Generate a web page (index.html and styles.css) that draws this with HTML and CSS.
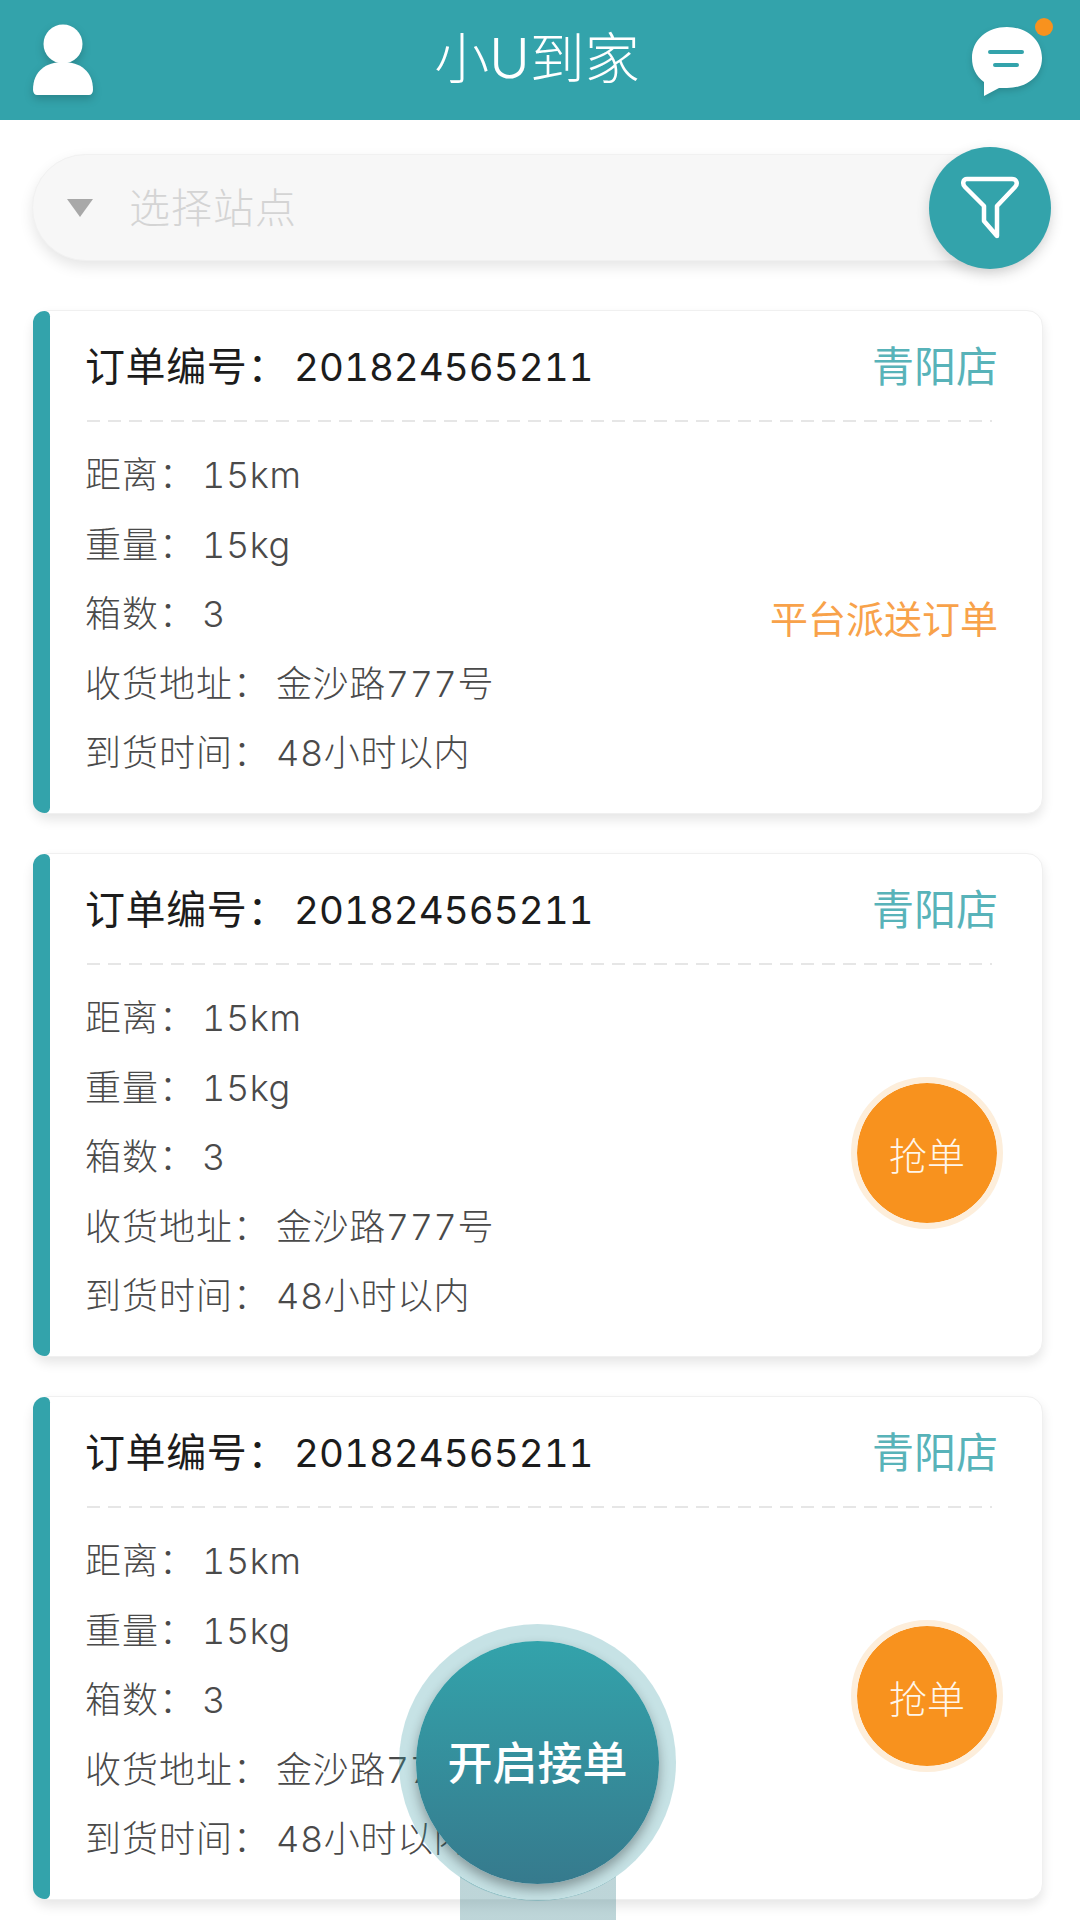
FILE: index.html
```html
<!DOCTYPE html>
<html lang="zh-CN">
<head>
<meta charset="utf-8">
<title>小U到家</title>
<link rel="stylesheet" href="styles.css">
</head>
<body>
<div class="app">
  <header class="topbar">
    <svg class="icon-user" viewBox="0 0 60 74" width="60" height="74"><circle cx="30" cy="20" r="19.5" fill="#fff"/><path d="M0 66C0 47 13 38 30 38s30 9 30 28c0 3-2 5-4 5H4c-2 0-4-2-4-5z" fill="#fff"/></svg>
    <h1 class="title">小U到家</h1>
    <div class="msg">
      <svg class="icon-msg" viewBox="0 0 72 72" width="72" height="72"><path d="M36 1c20 0 35 13 35 31S56 62 36 62c-3 0-6 0-8 0L13 70V56C5 50 1 42 1 32 1 14 16 1 36 1z" fill="#fff"/><path d="M19 26H51M24 39H46" stroke="#33a3ab" stroke-width="4" stroke-linecap="round"/></svg>
      <span class="dot"></span>
    </div>
  </header>

  <div class="search">
    <div class="search-box">
      <span class="caret"></span>
      <span class="placeholder">选择站点</span>
    </div>
    <div class="filter">
      <svg viewBox="0 0 60 66" width="60" height="66"><path d="M7 3H52C57 3 58 8 55 11L37 30V60L24 45V30L5 11C2 8 3 3 7 3z" fill="none" stroke="#fff" stroke-width="4.5" stroke-linejoin="round"/></svg>
    </div>
  </div>

  <main class="list">
    <article class="card">
      <div class="card-head"><span class="order">订单编号：<span class="order-no">201824565211</span></span><span class="shop">青阳店</span></div>
      <div class="card-body">
        <dl class="info">
          <div>距离：<span class="val">15km</span></div>
          <div>重量：<span class="val">15kg</span></div>
          <div>箱数：<span class="val">3</span></div>
          <div>收货地址：<span class="val">金沙路777号</span></div>
          <div>到货时间：<span class="val">48小时以内</span></div>
        </dl>
        <span class="dispatch">平台派送订单</span>
      </div>
    </article>
    <article class="card">
      <div class="card-head"><span class="order">订单编号：<span class="order-no">201824565211</span></span><span class="shop">青阳店</span></div>
      <div class="card-body">
        <dl class="info">
          <div>距离：<span class="val">15km</span></div>
          <div>重量：<span class="val">15kg</span></div>
          <div>箱数：<span class="val">3</span></div>
          <div>收货地址：<span class="val">金沙路777号</span></div>
          <div>到货时间：<span class="val">48小时以内</span></div>
        </dl>
        <button class="grab">抢单</button>
      </div>
    </article>
    <article class="card">
      <div class="card-head"><span class="order">订单编号：<span class="order-no">201824565211</span></span><span class="shop">青阳店</span></div>
      <div class="card-body">
        <dl class="info">
          <div>距离：<span class="val">15km</span></div>
          <div>重量：<span class="val">15kg</span></div>
          <div>箱数：<span class="val">3</span></div>
          <div>收货地址：<span class="val">金沙路777号</span></div>
          <div>到货时间：<span class="val">48小时以内</span></div>
        </dl>
        <button class="grab">抢单</button>
      </div>
    </article>
  </main>

  <div class="fab-stem"></div>
  <button class="fab">开启接单</button>
</div>
</body>
</html>
```
FILE: styles.css
```css
* { box-sizing: border-box; }
html, body { margin: 0; padding: 0; background: #fff; }
body { font-family: Inter, "Noto Sans CJK SC", "Noto Sans", sans-serif; font-feature-settings: "tnum"; }
.app { position: relative; width: 1080px; height: 1920px; overflow: hidden; }

.topbar { height: 120px; background: #33a3ab; display: flex; align-items: center; justify-content: space-between; padding: 0 37px 0 33px; position: relative; }
.icon-user { filter: drop-shadow(0 4px 4px rgba(0,0,0,.18)); margin-top: 2px; }
.title { position: absolute; left: 0; right: 6px; top: 0; margin: 0; line-height: 117px; text-align: center; font-size: 55px; font-weight: 300; color: #fff; }
.msg { position: relative; width: 72px; height: 72px; margin-top: 4px; }
.icon-msg { display: block; filter: drop-shadow(0 3px 3px rgba(0,0,0,.15)); }
.dot { position: absolute; right: -10px; top: -8px; width: 18px; height: 18px; border-radius: 50%; background: #f8921e; }

.search { position: relative; padding: 34px 38px 0 32px; height: 190px; }
.search-box { height: 107px; border-radius: 54px; background: #f7f7f7; border: 1px solid #f1f1f1; box-shadow: 0 6px 14px rgba(0,0,0,.1); display: flex; align-items: center; padding-left: 34px; }
.caret { width: 0; height: 0; border-left: 13px solid transparent; border-right: 13px solid transparent; border-top: 18px solid #a8a8a8; }
.placeholder { margin-left: 36px; padding-bottom: 5px; font-size: 41px; color: #d4d4d4; font-weight: 300; letter-spacing: 1px; }
.filter { position: absolute; left: 929px; top: 27px; width: 122px; height: 122px; border-radius: 50%; background: #33a3ab; box-shadow: 0 5px 14px rgba(0,0,0,.16); display: flex; align-items: center; justify-content: center; }
.filter svg { margin-top: 2px; }

.list { display: flex; flex-direction: column; gap: 39px; padding: 0 37px 0 33px; }
.card { position: relative; height: 504px; border-radius: 16px; background: #fff; border: 1px solid #f0f0f0; box-shadow: 0 6px 12px rgba(0,0,0,.1); padding: 0 0 0 53px; }
.card::before { content: ""; position: absolute; left: -1px; top: 0; bottom: 0; width: 17px; background: #33a3ab; border-radius: 16px 7px 7px 16px; }
.card-head { height: 111px; margin-right: 50px; display: flex; justify-content: space-between; align-items: center; padding-bottom: 6px; background: repeating-linear-gradient(90deg, #e6e6e6 0 13px, transparent 13px 21px) left bottom / 100% 2px no-repeat; }
.order { margin-left: -2px; font-size: 40px; color: #1c1c1c; font-weight: 400; white-space: nowrap; letter-spacing: .6px; }
.order-no { font-size: 38.5px; letter-spacing: 0; margin-left: 6px; }
.shop { font-size: 42px; color: #58b3b9; margin-right: -6px; }
.card-body { position: relative; padding-top: 19px; }
.info { margin: 0 0 0 -2px; font-size: 36px; color: #4a4a4a; font-weight: 300; }
.info div { height: 69.5px; line-height: 69.5px; white-space: nowrap; letter-spacing: 1px; }
.val { margin-left: 6px; letter-spacing: .6px; }
.dispatch { position: absolute; right: 44px; top: 174px; font-size: 38px; color: #f8a24a; line-height: 46px; }
.grab { position: absolute; right: 39px; top: 112px; width: 152px; height: 152px; padding: 0; border: 6px solid #fdeedb; background-clip: padding-box; border-radius: 50%; background-color: #f8921e; color: #fff6ea; font-family: inherit; font-size: 38px; font-weight: 300; }

.fab-stem { position: absolute; left: 460px; top: 1860px; width: 156px; height: 60px; background: radial-gradient(circle 138px at 78px -98px, transparent 138px, rgba(51,125,135,.32) 138.5px); }
.fab { position: absolute; left: 416px; top: 1641px; width: 243px; height: 243px; padding: 0 0 4px; border: none; border-radius: 50%; background: linear-gradient(#33a3ab, #367a8d); color: #fff; font-family: inherit; font-size: 45px; font-weight: 500; box-shadow: 0 6px 12px rgba(0,0,0,.32), 0 0 0 17px rgba(51,150,160,.28); }
```
